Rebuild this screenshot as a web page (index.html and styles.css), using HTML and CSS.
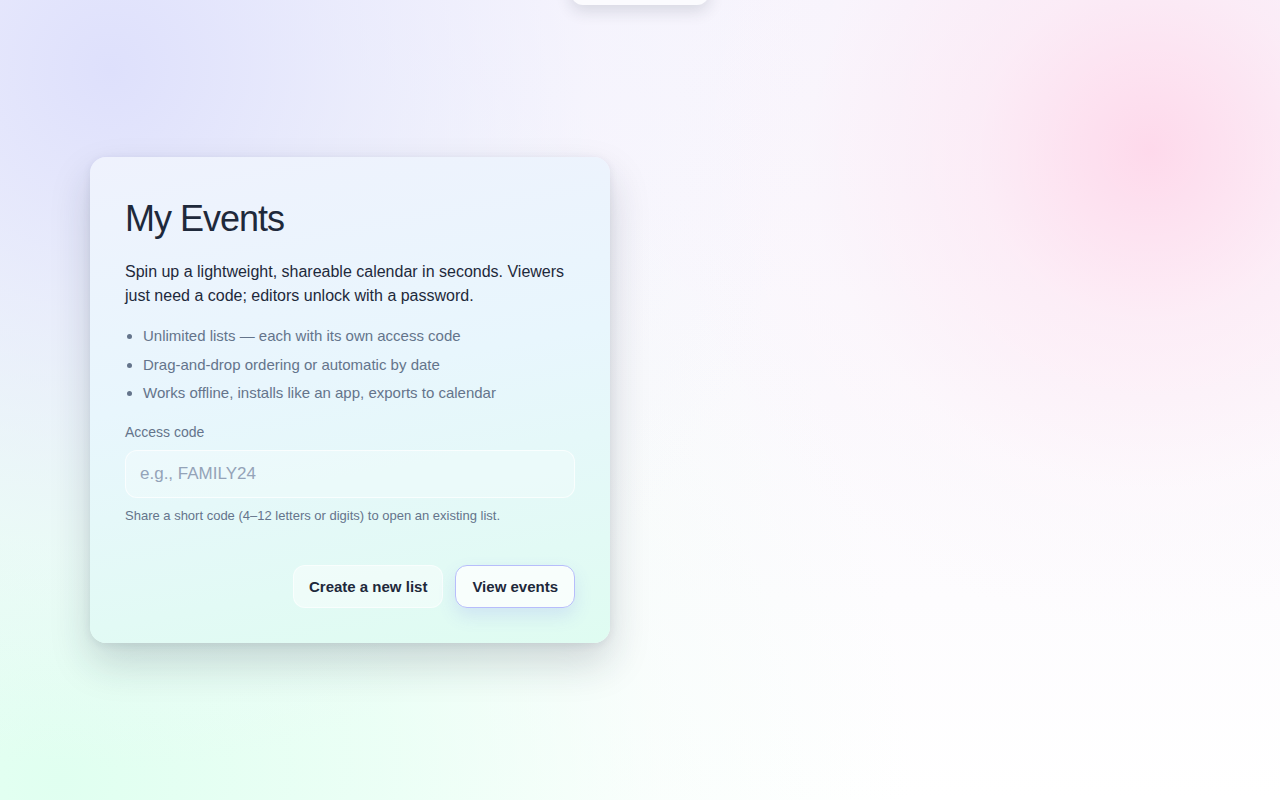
FILE: index.html
```html
<!DOCTYPE html>
<html lang="en">
<head>
  <meta charset="UTF-8">
  <meta name="viewport" content="width=device-width, initial-scale=1.0">
  <title>My Events</title>
  <link rel="stylesheet" href="styles.css">
</head>
<body>
<div class="toast"></div>
<main class="page">
  <section class="card">
    <h1>My Events</h1>
    <p class="lead">Spin up a lightweight, shareable calendar in seconds. Viewers just need a code; editors unlock with a password.</p>
    <ul class="features">
      <li>Unlimited lists — each with its own access code</li>
      <li>Drag-and-drop ordering or automatic by date</li>
      <li>Works offline, installs like an app, exports to calendar</li>
    </ul>
    <label class="label" for="code">Access code</label>
    <input type="text" id="code" class="input" placeholder="e.g., FAMILY24">
    <p class="hint">Share a short code (4–12 letters or digits) to open an existing list.</p>
    <div class="actions">
      <button class="btn">Create a new list</button>
      <button class="btn primary">View events</button>
    </div>
  </section>
</main>
</body>
</html>
```

FILE: styles.css
```css
html, body {
  margin: 0;
  height: 100%;
}
body {
  font-family: "Liberation Sans", Arial, sans-serif;
  color: #1e293b;
  background:
    radial-gradient(circle at 1150px 150px, rgba(255, 212, 232, 0.85) 0, rgba(255, 226, 240, 0.5) 170px, rgba(255, 240, 248, 0.2) 340px, rgba(255, 255, 255, 0) 480px),
    radial-gradient(circle at 110px 70px, rgba(222, 224, 252, 1) 0, rgba(230, 232, 252, 0.75) 240px, rgba(240, 240, 253, 0.3) 480px, rgba(255, 255, 255, 0) 700px),
    radial-gradient(circle at 60px 780px, rgba(224, 255, 240, 1) 0, rgba(230, 255, 243, 0.8) 320px, rgba(240, 253, 247, 0.35) 600px, rgba(255, 255, 255, 0) 850px),
    linear-gradient(180deg, #f7f5fd 0%, #fbf9fd 50%, #ffffff 100%);
  overflow: hidden;
}
.toast {
  position: absolute;
  top: -40px;
  left: 571px;
  width: 138px;
  height: 45px;
  background: #fbfbfe;
  border-radius: 12px;
  box-shadow: 0 6px 16px rgba(30, 41, 59, 0.14);
}
.page {
  padding: 157px 0 0 90px;
}
.card {
  width: 450px;
  padding: 35px;
  border-radius: 16px;
  background: linear-gradient(170deg, #eff2fd 0%, #e8f6fd 45%, #dffcf1 100%);
  box-shadow: 0 20px 40px rgba(30, 41, 59, 0.18), 0 2px 8px rgba(30, 41, 59, 0.08);
}
h1 {
  margin: 5px 0 0;
  font-size: 36px;
  font-weight: 400;
  letter-spacing: -1px;
  line-height: 44px;
  color: #1e293b;
}
.lead {
  margin: 19px 0 0;
  font-size: 16px;
  line-height: 24px;
  color: #1e293b;
}
.features {
  margin: 18px 0 0;
  padding-left: 18px;
  color: #64748b;
  font-size: 15px;
  line-height: 20px;
}
.features li {
  margin-bottom: 8.5px;
}
.label {
  display: block;
  margin-top: 21px;
  font-size: 14px;
  color: #64748b;
}
.input {
  display: block;
  box-sizing: border-box;
  width: 100%;
  height: 48px;
  margin-top: 10px;
  padding: 0 14px;
  border: 1px solid rgba(255, 255, 255, 0.7);
  border-radius: 12px;
  background: rgba(255, 255, 255, 0.25);
  font-family: inherit;
  font-size: 17px;
  color: #1e293b;
  outline: none;
}
.input::placeholder {
  color: #94a3b8;
}
.hint {
  margin: 10px 0 0;
  font-size: 13px;
  color: #64748b;
}
.actions {
  display: flex;
  justify-content: flex-end;
  gap: 12px;
  margin-top: 42px;
}
.btn {
  height: 43px;
  padding: 0 15px;
  border: 1px solid rgba(255, 255, 255, 0.6);
  border-radius: 12px;
  background: rgba(255, 255, 255, 0.45);
  font-family: inherit;
  font-size: 15px;
  font-weight: 700;
  color: #1e293b;
  cursor: pointer;
}
.btn.primary {
  padding: 0 16px;
  background: rgba(255, 255, 255, 0.75);
  border-color: #b7bdfb;
  box-shadow: 0 8px 18px rgba(99, 102, 241, 0.14);
}
```
